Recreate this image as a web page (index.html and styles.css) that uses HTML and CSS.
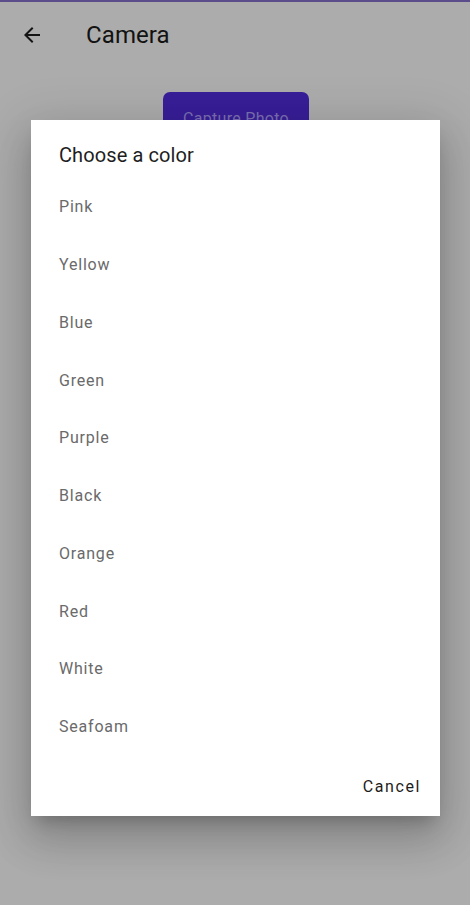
FILE: index.html
```html
<!DOCTYPE html>
<html>
<head>
<meta charset="utf-8">
<link rel="stylesheet" href="styles.css">
</head>
<body>
<div class="screen">
  <div class="status"></div>
  <header class="appbar">
    <svg class="back" width="24" height="24" viewBox="0 0 24 24"><path d="M20 11H7.83l5.59-5.59L12 4l-8 8 8 8 1.41-1.41L7.83 13H20v-2z" fill="#141414"/></svg>
    <h1 class="title">Camera</h1>
  </header>
  <main class="content">
    <button class="capture">Capture Photo</button>
  </main>
  <div class="dialog">
    <h2 class="dlg-title">Choose a color</h2>
    <ul class="items">
      <li>Pink</li>
      <li>Yellow</li>
      <li>Blue</li>
      <li>Green</li>
      <li>Purple</li>
      <li>Black</li>
      <li>Orange</li>
      <li>Red</li>
      <li>White</li>
      <li>Seafoam</li>
    </ul>
    <div class="actions"><span class="cancel">Cancel</span></div>
  </div>
</div>
</body>
</html>
```
FILE: styles.css
```css
html, body { margin: 0; padding: 0; }
body {
  width: 470px; height: 905px; overflow: hidden;
  background: #acacac;
  font-family: Roboto, "Noto Sans", sans-serif;
}
.screen { position: relative; width: 470px; height: 905px; }
.status { height: 2px; background: #5b4d8c; }
.appbar {
  height: 68px; display: flex; align-items: center;
  padding-left: 20px;
}
.back { display: block; margin-top: -3px; }
.title {
  margin: -2px 0 0 42px; font-size: 24px; font-weight: 400;
  color: #121212; letter-spacing: 0.1px;
}
.content { display: flex; justify-content: center; padding-top: 22px; }
.capture {
  margin-left: 2px;
  width: 146px; height: 40px; border: none; border-radius: 7px;
  background: #381e98; color: #7c70b4;
  font-family: Roboto, sans-serif; font-size: 16px; letter-spacing: 0.3px;
  padding: 14px 0 0 0; line-height: 20px;
}
.dialog {
  position: absolute; left: 31px; top: 120px; width: 409px; height: 696px;
  background: #fff; box-sizing: border-box;
  box-shadow: 0 24px 38px 3px rgba(0,0,0,.14), 0 9px 46px 8px rgba(0,0,0,.12), 0 11px 15px -7px rgba(0,0,0,.2);
  display: flex; flex-direction: column;
}
.dlg-title {
  margin: 0; padding: 23px 0 0 28px; line-height: 24px;
  font-size: 20px; font-weight: 400; color: #1e1e1e; letter-spacing: 0.1px;
}
.items { list-style: none; margin: 11px 0 0 0; padding: 0; }
.items li {
  height: 57.75px; display: flex; align-items: center;
  padding-left: 28px; font-size: 16px; color: #6a6a6a; letter-spacing: 0.8px;
}
.actions {
  display: flex; justify-content: flex-end; padding: 13px 19px 0 0;
}
.cancel {
  height: 36px; display: flex; align-items: center;
  font-size: 16px; font-weight: 400; color: #1c1c1c; letter-spacing: 1.6px;
}
```
